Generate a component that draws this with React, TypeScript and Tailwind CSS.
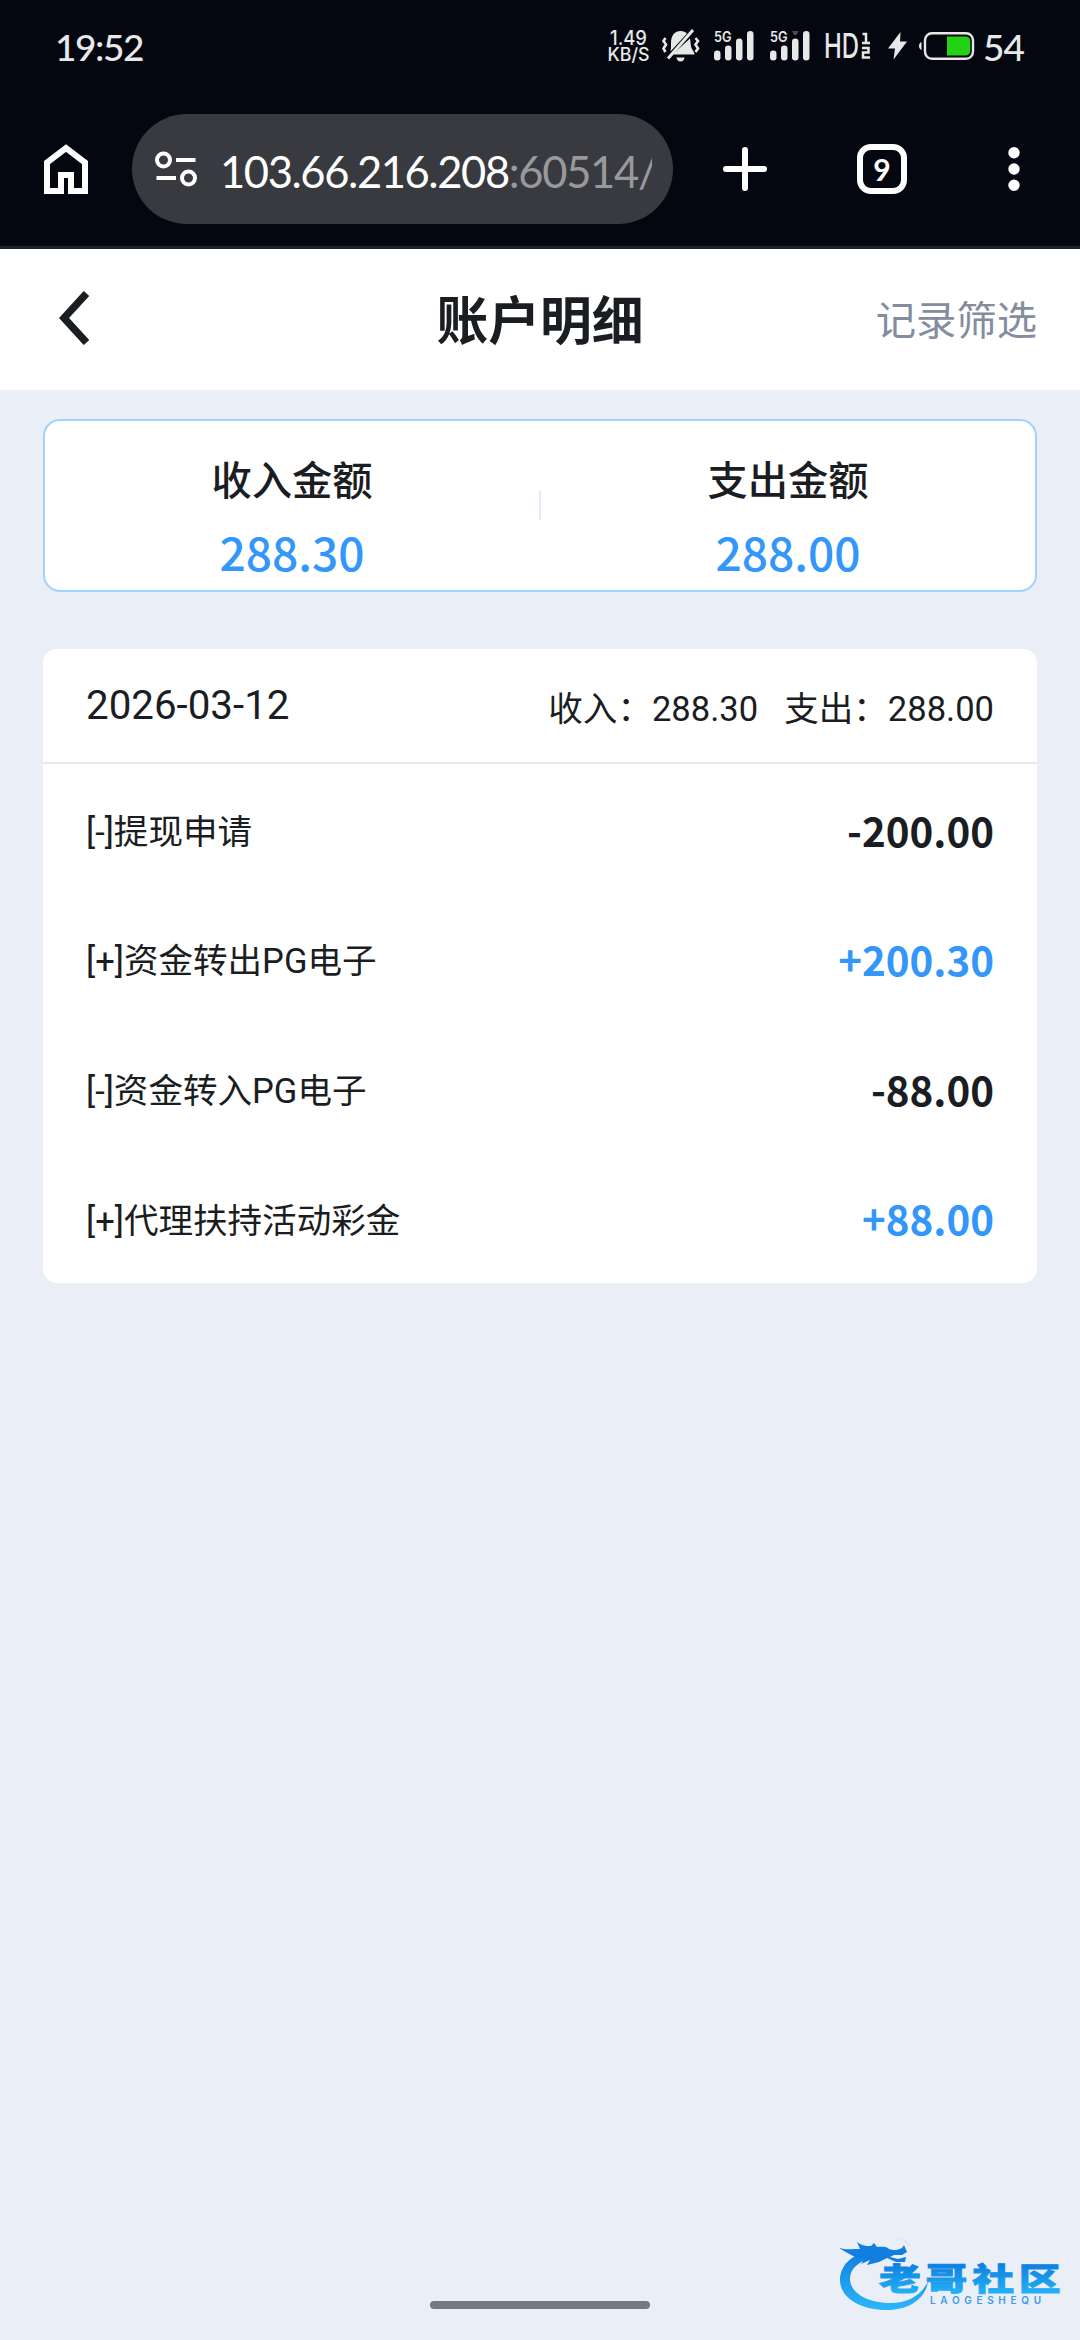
import React from "react";

const records = [
  { id: 1, title: "[-]提现申请", amount: "-200.00", income: false },
  { id: 2, title: "[+]资金转出PG电子", amount: "+200.30", income: true },
  { id: 3, title: "[-]资金转入PG电子", amount: "-88.00", income: false },
  { id: 4, title: "[+]代理扶持活动彩金", amount: "+88.00", income: true },
];

function SignalBars({ roaming = false }: { roaming?: boolean }) {
  return (
    <svg width="40" height="32" viewBox="0 0 40 32" fill="#e7e8e8" className="overflow-visible">
      <text x="0" y="12" fontSize="14.5" fontWeight="600" textLength="17.5" lengthAdjust="spacingAndGlyphs">5G</text>
      <rect x="0" y="20.5" width="6.5" height="10" rx="3.2" />
      <rect x="11" y="15.5" width="6.5" height="15" rx="3.2" />
      <rect x="22" y="8.5" width="6.5" height="22" rx="3.2" />
      <rect x="33" y="1" width="6.5" height="29.5" rx="3.2" />
      {roaming && <path d="M22 1h6.5l-2 4h-2.5z" fill="#4b4d52" />}
    </svg>
  );
}

function StatusBar() {
  return (
    <div className="flex h-[92px] items-center pl-[55px] text-[#e7e8e8]">
      <span className="w-[552px] text-[37px] leading-none font-medium font-['Lato'] tracking-[-1.4px]">19:52</span>

      <svg width="44" height="36" viewBox="0 0 44 36" fill="#e7e8e8" className="overflow-visible font-['Inter']">
        <text x="3" y="16.8" fontSize="20" fontWeight="500" textLength="37" lengthAdjust="spacingAndGlyphs">1.49</text>
        <text x="0.5" y="33.3" fontSize="18" fontWeight="500" textLength="42" lengthAdjust="spacingAndGlyphs">KB/S</text>
      </svg>

      {/* Muted bell */}
      <svg width="40" height="36" viewBox="0 0 40 36" fill="#e7e8e8" className="ml-[10px]">
        <path d="M10 19v-4C10 7 14 3 19.500 3c3 0 5 1 6.500 2.500L9.500 23.500z" />
        <path d="M29 10.500c.7 3 .5 6.500 1.500 9.500.6 2 3 4 3 6.500H11.500z" />
        <path d="M15.500 29.500h8c-.3 2.500-1.800 4-4 4s-3.700-1.500-4-4z" />
        <path d="M7 30.500L32 2" stroke="#e7e8e8" strokeWidth="3" />
        <path d="M4.500 10l-2 3 2.500 3.500-2.500 4 2 3.500M34.500 10l2.500 3-2.500 3.500 2.500 4-2.500 3.500" fill="none" stroke="#e7e8e8" strokeWidth="2.600" />
      </svg>

      <div className="ml-[13px] flex gap-[16px] font-['Inter']">
        <SignalBars />
        <SignalBars roaming />
      </div>

      <svg width="46" height="32" viewBox="0 0 46 32" fill="#e7e8e8" className="ml-[15px] overflow-visible font-['Inter']">
        <text x="-1" y="28" fontSize="34" fontWeight="500" textLength="35" lengthAdjust="spacingAndGlyphs">HD</text>
        <path d="M37.500 4h3.500v9M37 13h8M37 18h6.500v4.500H38v5h7" fill="none" stroke="#e7e8e8" strokeWidth="2.500" />
      </svg>

      <svg width="20" height="28" viewBox="0 0 20 28" fill="#e7e8e8" className="ml-[17px]">
        <path d="M12.500 0L0 16.500h7L5.500 27.500 19 9.500h-7z" />
      </svg>

      <svg width="56" height="28" viewBox="0 0 56 28" className="ml-[11px]">
        <path d="M2.500 10v8C1 17.500 0 16 0 14s1-3.500 2.500-4z" fill="#e7e8e8" />
        <rect x="6" y="1.200" width="48" height="25.600" rx="7" fill="none" stroke="#e7e8e8" strokeWidth="2.400" />
        <path d="M28 4.500h18c3.500 0 5.300 1.800 5.300 5.300v8.400c0 3.500-1.800 5.300-5.300 5.300H28z" fill="#23d214" />
      </svg>

      <span className="ml-[8px] text-[37px] leading-none font-medium font-['Lato'] tracking-[-1px]">54</span>
    </div>
  );
}

function BrowserBar() {
  return (
    <div className="flex h-[154px] items-center pl-[44px]">
      <svg width="44" height="50" viewBox="0 0 44 50" fill="none" stroke="#fff" strokeWidth="6">
        <path d="M3 47V18.500L22 4l19 14.500V47H27V31H17v16z" />
      </svg>

      <div className="ml-[44px] flex h-[110px] w-[541px] items-center rounded-full bg-[#383a3f] pl-[23px]">
        <svg width="42" height="36" viewBox="0 0 42 36" fill="none" stroke="#fff" strokeWidth="4">
          <circle cx="8.500" cy="9" r="6.500" />
          <path d="M21 9h19.500M1.500 27h19.500" />
          <circle cx="33.500" cy="27" r="6.500" />
        </svg>
        <div className="ml-[23px] w-[432px] overflow-hidden pt-[3px] text-[43.5px] leading-[60px] font-['Lato'] whitespace-nowrap text-white">
          <span className="tracking-[-1.4px]">103.66.216.208</span>
          <span className="tracking-[-1.3px] text-[#98999c]">:60514/</span>
        </div>
      </div>

      <svg width="44" height="44" viewBox="0 0 44 44" fill="none" stroke="#fff" strokeWidth="6" strokeLinecap="round" className="ml-[50px]">
        <path d="M22 3v38M3 22h38" />
      </svg>

      <div className="ml-[90px] flex h-[50px] w-[50px] items-center justify-center rounded-[14px] border-[6px] border-white text-[30px] leading-none font-bold font-['Lato'] text-white">
        9
      </div>

      <svg width="12" height="44" viewBox="0 0 12 44" fill="#fff" className="ml-[101px]">
        <circle cx="6" cy="5.700" r="5.700" />
        <circle cx="6" cy="22" r="5.700" />
        <circle cx="6" cy="38.300" r="5.700" />
      </svg>
    </div>
  );
}

function SummaryItem({ label, value }: { label: string; value: string }) {
  return (
    <div className="flex h-full flex-1 flex-col items-center pt-[28px] font-medium">
      <span className="text-[40.3px] leading-[58px] text-[#1a1d21]">{label}</span>
      <span className="mt-[12px] text-[46.1px] leading-[64px] text-[#3296fa]">{value}</span>
    </div>
  );
}

function CommunityLogo() {
  return (
    <svg width="240" height="80" viewBox="0 0 240 80" className="absolute right-0 bottom-[22px]">
      <defs>
        <linearGradient id="ring" x1="0" y1="0" x2="0" y2="1">
          <stop offset="0" stopColor="#117fe0" />
          <stop offset="1" stopColor="#2bb6fb" />
        </linearGradient>
        <linearGradient id="word" x1="0" y1="0" x2="0" y2="1">
          <stop offset="0.2" stopColor="#0d7de0" />
          <stop offset="0.85" stopColor="#22b0f4" />
        </linearGradient>
      </defs>
      {/* Dragon body */}
      <path d="M31 13C11 16 0 28 0 42c0 17 19 30 47 30 22 0 38-11 41-28-8 14-20 21-37 21C26 65 10 54 10 41c0-11 9-18 25-22z" fill="url(#ring)" />
      {/* Head, horns and whiskers */}
      <path d="M-2 9c5 3 11 2 22 2l-3-7c5 4 9 4 14 4l3-3 3 4c5 0 9-1 12 2 5 2 9 1 13-1l2-3 3 7-5 3h-8l-4 2 8 2 8-2-1 5h-9l-9-4-8 4-12 3 3-5-9 4 5-7-7 2C12 17 4 14-2 9z" fill="#117fe0" />
      <path d="M44-2c10 0 22 3 26 10" fill="none" stroke="#d8e5f7" strokeWidth="1.500" />
      <text transform="translate(39 52) scale(1.35 1)" x="0 34.500 69 103.500" y="0" fontSize="31" fontWeight="900" fill="url(#word)" stroke="url(#word)" strokeWidth="0.800">
        老哥社区
      </text>
      <text x="90" y="65.5" fontSize="10" fontWeight="600" textLength="111" fill="#3d9bea" className="font-['Inter']">LAOGESHEQU</text>
    </svg>
  );
}

export default function App() {
  return (
    <div className="relative flex h-[2340px] w-[1080px] flex-col overflow-hidden bg-[#eaeef7] font-['Noto_Sans_CJK_SC',sans-serif] text-[#1a1d21]">
      <div className="h-[249px] shrink-0 border-b-[3px] border-[#1f212a] bg-[#04070f]">
        <StatusBar />
        <BrowserBar />
      </div>

      {/* Page header */}
      <header className="grid h-[141px] shrink-0 grid-cols-3 items-center bg-white px-[43px] pb-[4px]">
        <svg width="30" height="54" viewBox="0 0 30 54" fill="none" stroke="#1a1d21" strokeWidth="7.500" className="ml-[16px]">
          <path d="M27.500 2.500L5 27l22.500 24.500" />
        </svg>
        <h1 className="text-center text-[51.8px] leading-[76px] font-bold">账户明细</h1>
        <span className="text-right text-[40.3px] leading-[60px] text-[#848d9f]">记录筛选</span>
      </header>

      <main className="px-[43px] pt-[29px]">
        <section className="flex h-[173px] items-center rounded-[17px] border-2 border-[#a0d3ff] bg-white">
          <SummaryItem label="收入金额" value="288.30" />
          <div className="h-[29px] w-[2px] bg-[#e6e9f5]" />
          <SummaryItem label="支出金额" value="288.00" />
        </section>

        <section className="mt-[57px] h-[634px] rounded-[14px] bg-white">
          <div className="flex h-[115px] items-center justify-between border-b-2 border-[#e6e8ea] px-[43px] font-['Roboto','Noto_Sans_CJK_SC',sans-serif]">
            <span className="pt-[2px] text-[40.3px]">2026-03-12</span>
            <div className="flex gap-[26px] pt-[8px] text-[34.56px]">
              <span>收入：288.30</span>
              <span>支出：288.00</span>
            </div>
          </div>
          {records.map(r => (
            <div key={r.id} className="flex h-[129.6px] items-center justify-between px-[43px]">
              <span className="pt-[8px] text-[34.56px] font-['Roboto','Noto_Sans_CJK_SC',sans-serif]">{r.title}</span>
              <span className={r.income ? "pt-[2px] text-[40.3px] font-bold text-[#3296fa]" : "pt-[2px] text-[40.3px] font-bold"}>{r.amount}</span>
            </div>
          ))}
        </section>
      </main>

      <CommunityLogo />
      <div className="mx-auto mt-auto mb-[31px] h-[8px] w-[220px] shrink-0 rounded-full bg-[#76797e]" />
    </div>
  );
}
